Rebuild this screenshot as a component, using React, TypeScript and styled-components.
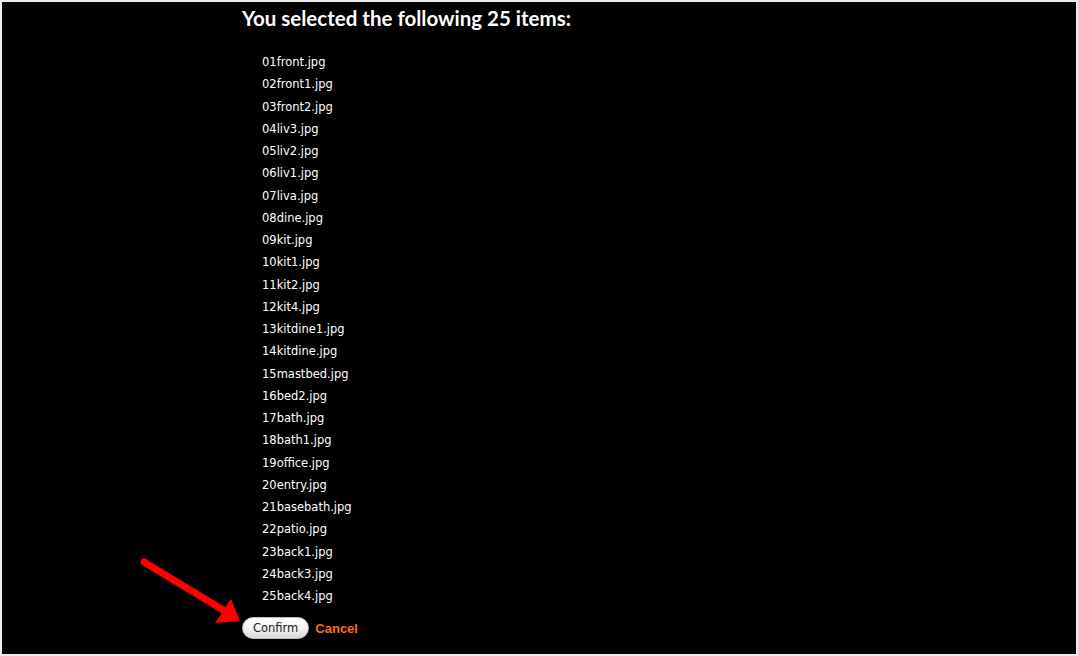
import React from "react"
import styled, { createGlobalStyle } from "styled-components"

const GlobalStyle = createGlobalStyle`
  html, body {
    margin: 0;
    padding: 0;
    background: #fff;
  }
`

const Frame = styled.div`
  position: relative;
  box-sizing: border-box;
  width: 1078px;
  height: 656px;
  background: #000;
  border: 2px solid #ececec;
  overflow: hidden;
`

const Content = styled.div`
  padding: 4px 0 0 240px;
  color: #fff;
`

const Header = styled.h1`
  margin: 0;
  font-family: Lato, "Open Sans", sans-serif;
  font-weight: 700;
  font-size: 20.5px;
  line-height: 24px;
`

const List = styled.ul`
  list-style: none;
  margin: 21px 0 0 0;
  padding: 0 0 0 20px;
  li {
    font-family: "DejaVu Sans", Verdana, sans-serif;
    font-size: 11.5px;
    line-height: 22.25px;
  }
`

const Actions = styled.div`
  display: flex;
  align-items: center;
  gap: 6px;
  margin-top: 10px;
`

const Button = styled.button`
  font-family: "DejaVu Sans", Verdana, sans-serif;
  font-size: 11.5px;
  color: #222;
  height: 22px;
  padding: 0 10px;
  border: 1px solid #bbb;
  border-radius: 11px;
  background: linear-gradient(#ffffff, #f4f4f4 50%, #d9d9d9);
  cursor: pointer;
`

const Cancel = styled.a`
  font-family: "Liberation Sans", Arial, sans-serif;
  font-weight: 700;
  font-size: 13px;
  color: #ff6a1a;
  text-decoration: none;
  cursor: pointer;
`

const Arrow = styled.svg`
  position: absolute;
  left: 0;
  top: 0;
  pointer-events: none;
`

const items = [
  "01front.jpg",
  "02front1.jpg",
  "03front2.jpg",
  "04liv3.jpg",
  "05liv2.jpg",
  "06liv1.jpg",
  "07liva.jpg",
  "08dine.jpg",
  "09kit.jpg",
  "10kit1.jpg",
  "11kit2.jpg",
  "12kit4.jpg",
  "13kitdine1.jpg",
  "14kitdine.jpg",
  "15mastbed.jpg",
  "16bed2.jpg",
  "17bath.jpg",
  "18bath1.jpg",
  "19office.jpg",
  "20entry.jpg",
  "21basebath.jpg",
  "22patio.jpg",
  "23back1.jpg",
  "24back3.jpg",
  "25back4.jpg",
]

export default function App() {
  return (
    <>
      <GlobalStyle />
      <Frame>
        <Content>
          <Header>You selected the following {items.length} items:</Header>
          <List>
            {items.map((name) => (
              <li key={name}>{name}</li>
            ))}
          </List>
          <Actions>
            <Button>Confirm</Button>
            <Cancel>Cancel</Cancel>
          </Actions>
        </Content>
        <Arrow width="1078" height="656" viewBox="0 0 1078 656">
          <line
            x1="142"
            y1="560"
            x2="226"
            y2="611"
            stroke="#f00"
            strokeWidth="7"
            strokeLinecap="round"
          />
          <polygon points="238,619 213,621 229,597" fill="#f00" />
        </Arrow>
      </Frame>
    </>
  )
}
